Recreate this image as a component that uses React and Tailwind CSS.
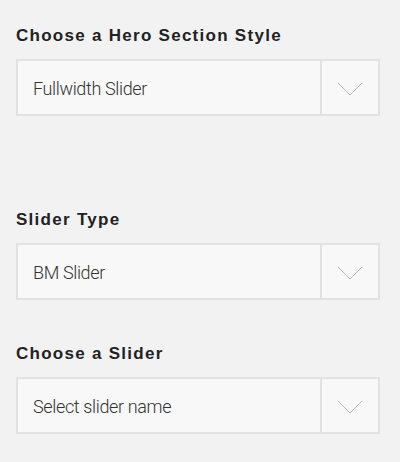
import { useState } from 'react'

const labelCls = "text-[17px] leading-none font-bold tracking-[0.075em] text-[#222]"

// Thin chevron used in the select trigger
function Chevron() {
  return (
    <svg width="26" height="14" viewBox="0 0 26 14" fill="none">
      <path d="M1 1 L13 13 L25 1" stroke="#b5b5b5" strokeWidth="1" />
    </svg>
  )
}

function FakeSelect({ value }) {
  return (
    <div className="flex h-[57px] border-2 border-[#e2e2e2] bg-[#f8f8f8]">
      <div
        className="flex-1 flex items-center pl-[15px] pt-[2px] text-[18px] font-light text-[#333] tracking-[-0.02em]"
        style={{ fontFamily: 'Roboto, "Liberation Sans", sans-serif' }}
      >
        {value}
      </div>
      <div className="w-[58px] border-l-2 border-[#e2e2e2] flex items-center justify-center pt-[3px]">
        <Chevron />
      </div>
    </div>
  )
}

export default function App() {
  const [fields] = useState([
    { label: 'Choose a Hero Section Style', value: 'Fullwidth Slider' },
    { label: 'Slider Type', value: 'BM Slider' },
    { label: 'Choose a Slider', value: 'Select slider name' },
  ])

  return (
    <div
      className="w-[400px] h-[462px] bg-[#f2f2f2] pl-4 pr-5 pt-[27px]"
      style={{ fontFamily: '"Liberation Sans", Arial, sans-serif' }}
    >
      {/* Hero style */}
      <div className="flex flex-col gap-[15px]">
        <p className={labelCls}>{fields[0].label}</p>
        <FakeSelect value={fields[0].value} />
      </div>

      <div className="mt-[95px] flex flex-col gap-[15px]">
        <p className={labelCls}>{fields[1].label}</p>
        <FakeSelect value={fields[1].value} />
      </div>

      <div className="mt-[45px] flex flex-col gap-[15px]">
        <p className={labelCls}>{fields[2].label}</p>
        <FakeSelect value={fields[2].value} />
      </div>
    </div>
  )
}
